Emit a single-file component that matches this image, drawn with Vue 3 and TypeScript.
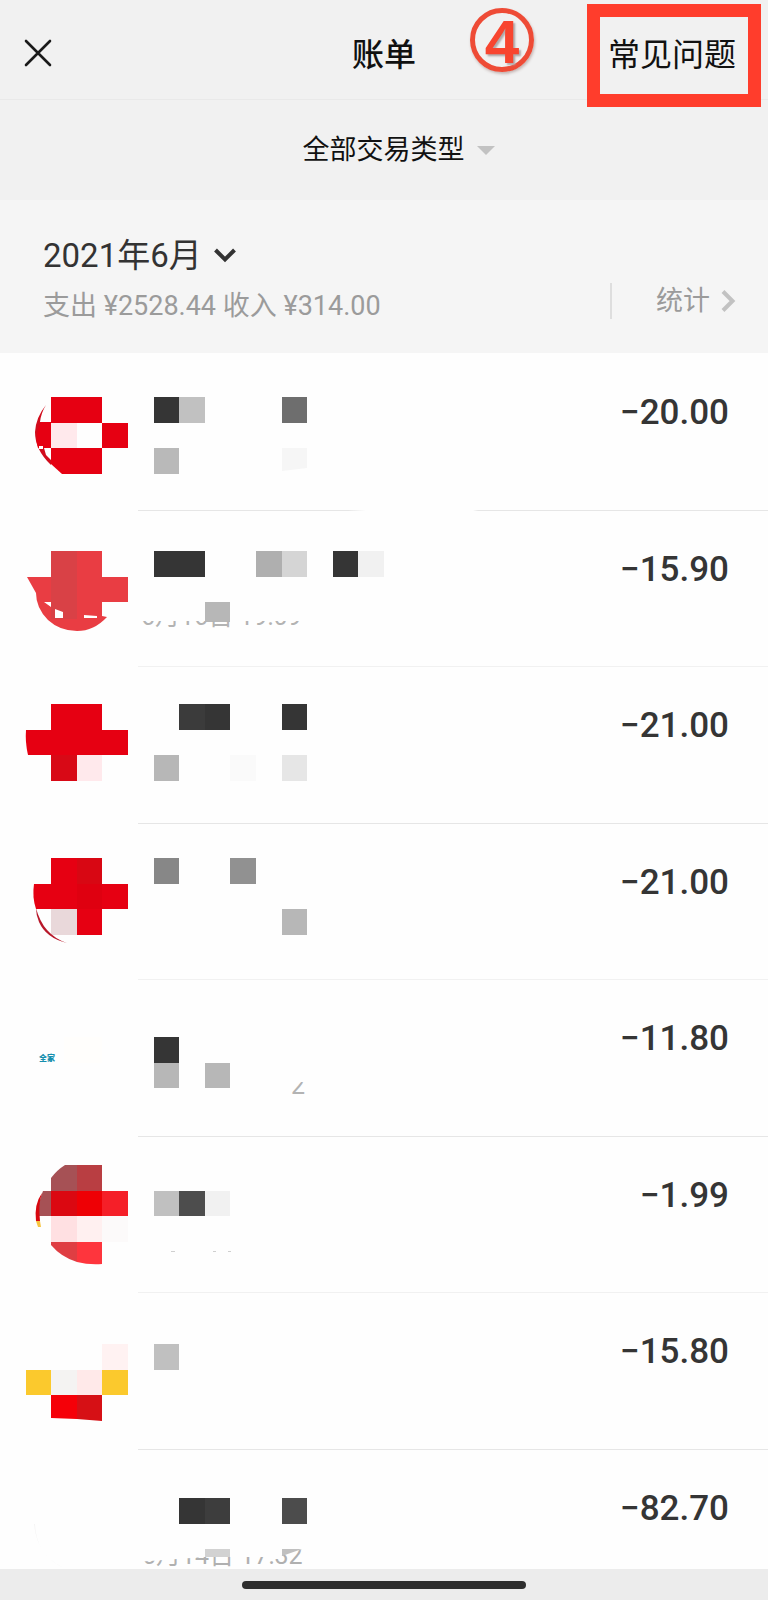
<script setup lang="ts">
interface Cell {
  col: number
  row: number
  fill: string
}
interface Shape {
  d: string
  fill: string
}
interface Note {
  text: string
  x: number
  y: number
  size: number
  fill: string
  clip: string
}
interface Bill {
  amount: string
  top: number
  cells: Cell[]
  shapes: Shape[]
  notes: Note[]
}

const CELL = 25.6
const edge = (n: number): number => Math.round(n * CELL)
const cell = (col: number, row: number, fill: string): Cell => ({ col, row, fill })

const bills: Bill[] = [
  {
    amount: '−20.00',
    top: 44,
    cells: [
      cell(2, 0, '#e60012'), cell(3, 0, '#e60012'),
      cell(2, 1, '#ffe9ec'), cell(4, 1, '#e60012'),
      cell(3, 2, '#e60012'),
      cell(6, 0, '#353535'), cell(7, 0, '#c1c1c1'), cell(11, 0, '#6e6e6e'),
      cell(6, 2, '#b9b9b9'),
    ],
    shapes: [
      { d: 'M51 95H77V121H62L51 111Z', fill: '#e60012' },
      { d: 'M46 52Q41 60 40 69H51V95H44L46 102L51 107V112Q35 97 35 79Q36 64 46 52Z', fill: '#d10c1c' },
      { d: 'M41 69H51V95H38Q34 82 41 69Z', fill: '#e60012' },
      { d: 'M39 93h4v3h-4Z', fill: '#ffffff' },
      { d: 'M282 95H307V115L282 118Z', fill: '#f6f6f6' },
    ],
    notes: [],
  },
  {
    amount: '−15.90',
    top: 41,
    cells: [
      cell(2, 0, '#d94146'), cell(3, 0, '#e93d43'),
      cell(2, 1, '#d94146'), cell(3, 1, '#e93d43'), cell(4, 1, '#e93d43'),
      cell(6, 0, '#353535'), cell(7, 0, '#353535'),
      cell(10, 0, '#afafaf'), cell(11, 0, '#d5d5d5'),
      cell(13, 0, '#353535'), cell(14, 0, '#f1f1f1'),
    ],
    shapes: [
      { d: 'M27 67H51V92H102V106L107 107Q94 121 77 121Q60 121 48 110Q36 98 36 83Z', fill: '#e93d43' },
      { d: 'M51 92H77V109H51Z', fill: '#d94146' },
      { d: 'M44 92H51V97ZM55 99L63 102V108H55ZM84 105L97 106V108H84Z', fill: '#ffffff' },
      { d: 'M205 92H230V112H205Z', fill: '#b7b7b7' },
    ],
    notes: [
      { text: '6月16日 19:09', x: 141, y: 115, size: 25, fill: '#b3b3b3', clip: 'M136 111H310V118H136Z' },
    ],
  },
  {
    amount: '−21.00',
    top: 38,
    cells: [
      cell(2, 0, '#e60012'), cell(3, 0, '#e60012'),
      cell(2, 1, '#e60012'), cell(3, 1, '#e60012'), cell(4, 1, '#e60012'),
      cell(2, 2, '#d80916'), cell(3, 2, '#ffe9ec'),
      cell(7, 0, '#3b3b3b'), cell(8, 0, '#353535'), cell(11, 0, '#353535'),
      cell(6, 2, '#b7b7b7'), cell(9, 2, '#fafafa'), cell(11, 2, '#e6e6e6'),
    ],
    shapes: [{ d: 'M26 64H51V89H28Q25 76 26 64Z', fill: '#e60012' }],
    notes: [],
  },
  {
    amount: '−21.00',
    top: 35,
    cells: [
      cell(2, 0, '#e60012'), cell(3, 0, '#d80713'),
      cell(2, 1, '#e60012'), cell(3, 1, '#df0010'), cell(4, 1, '#e60012'),
      cell(2, 2, '#e9d8da'), cell(3, 2, '#e60012'),
      cell(6, 0, '#878787'), cell(9, 0, '#919191'), cell(11, 2, '#b7b7b7'),
    ],
    shapes: [
      { d: 'M34 61H51V86H36Q32 74 34 61Z', fill: '#e60012' },
      { d: 'M36 85Q43 112 67 120Q46 115 39 99Q36 92 36 85Z', fill: '#b8182a' },
    ],
    notes: [],
  },
  {
    amount: '−11.80',
    top: 58,
    cells: [cell(6, 0, '#353535'), cell(6, 1, '#b7b7b7'), cell(8, 1, '#b7b7b7')],
    shapes: [{ d: 'M64 58H102V84H64Z', fill: '#fffefc' }],
    notes: [
      { text: '全家', x: 39, y: 82, size: 8, fill: '#178fae', clip: 'M36 70H58V88H36Z' },
      { text: '2', x: 291, y: 115, size: 25, fill: '#b3b3b3', clip: 'M288 118V113L301 103H306V118Z' },
    ],
  },
  {
    amount: '−1.99',
    top: 29,
    cells: [
      cell(3, 0, '#b93e42'),
      cell(2, 1, '#db0811'), cell(3, 1, '#ee0005'), cell(4, 1, '#f51f28'),
      cell(2, 2, '#ffe0e2'), cell(3, 2, '#fff0f0'), cell(4, 2, '#fcfafa'),
      cell(6, 1, '#c0c0c0'), cell(7, 1, '#4d4d4d'), cell(8, 1, '#f1f1f1'),
    ],
    shapes: [
      { d: 'M65 29H77V55H51V42Q57 34 65 29Z', fill: '#a65155' },
      { d: 'M43 55H51V80H39Q37 68 43 55Z', fill: '#a65155' },
      { d: 'M42 57Q38 68 40 85H36Q34 68 42 57Z', fill: '#d8070f' },
      { d: 'M36 85H40L41 91H38Z', fill: '#f7c542' },
      { d: 'M51 106H77V126Q61 121 51 109Z', fill: '#df3e43' },
      { d: 'M77 106H102V128Q89 129 77 126Z', fill: '#fe353d' },
      { d: 'M171 115h4v1h-4ZM213 115h3v1h-3ZM228 115h3v1h-3Z', fill: '#cfcfcf' },
    ],
    notes: [],
  },
  {
    amount: '−15.80',
    top: 52,
    cells: [
      cell(4, 0, '#fff2f2'),
      cell(1, 1, '#fbc92d'), cell(2, 1, '#f4f3f2'), cell(3, 1, '#ffe9e9'), cell(4, 1, '#fbc92d'),
      cell(6, 0, '#c0c0c0'),
    ],
    shapes: [
      { d: 'M51 103H77V127L51 126Z', fill: '#f50008' },
      { d: 'M77 103H102V129L77 127Z', fill: '#d61015' },
    ],
    notes: [],
  },
  {
    amount: '−82.70',
    top: 49,
    cells: [cell(7, 0, '#353535'), cell(8, 0, '#3d3d3d'), cell(11, 0, '#4c4c4c')],
    shapes: [
      { d: 'M35 75Q36 106 64 119Q37 107 34 75Z', fill: '#f4f4f4' },
      { d: 'M205 100H230V108H205Z', fill: '#d2d2d2' },
      { d: 'M282 100H302L282 107Z', fill: '#c0c0c0' },
    ],
    notes: [
      { text: '6月14日 17:32', x: 142, y: 115, size: 25, fill: '#b0b0b0', clip: 'M136 113L205 108H278L303 100H310V119H136Z' },
    ],
  },
]
</script>

<template>
  <main class="page">
    <header class="topbar">
      <button class="close" type="button" aria-label="关闭">
        <svg width="28" height="28" viewBox="0 0 28 28" fill="none" stroke="#1a1a1a" stroke-width="2.6" stroke-linecap="round">
          <path d="M2 2L26 26M26 2L2 26" />
        </svg>
      </button>
      <h1 class="title">账单</h1>
      <div class="step">4</div>
      <a class="faq" href="#faq">常见问题</a>
    </header>

    <div class="filter">
      <button class="filter-button" type="button">
        全部交易类型
        <svg width="18" height="9" viewBox="0 0 18 9"><path d="M0 0H18L9 9Z" fill="#c2c2c2" /></svg>
      </button>
    </div>

    <section class="summary">
      <div class="period">
        <button class="month" type="button">
          2021年6月
          <svg width="22" height="15" viewBox="0 0 22 15" fill="none" stroke="#333333" stroke-width="4">
            <path d="M1.5 2L11 11.5L20.5 2" />
          </svg>
        </button>
        <p class="totals">支出 ¥2528.44 收入 ¥314.00</p>
      </div>
      <a class="stats" href="#stats">
        统计
        <svg width="15" height="22" viewBox="0 0 15 22" fill="none" stroke="#c2c2c2" stroke-width="4">
          <path d="M2 1.5L11.5 11L2 20.5" />
        </svg>
      </a>
    </section>

    <ul class="bills">
      <li v-for="(bill, i) in bills" :key="i" class="bill">
        <svg class="mosaic" width="400" height="119" viewBox="0 0 400 119" aria-hidden="true">
          <rect
            v-for="(c, k) in bill.cells"
            :key="k"
            :x="edge(c.col)"
            :y="bill.top + edge(c.row)"
            :width="edge(c.col + 1) - edge(c.col)"
            :height="edge(c.row + 1) - edge(c.row)"
            :fill="c.fill"
          />
          <path v-for="(s, k) in bill.shapes" :key="'s' + k" :d="s.d" :fill="s.fill" />
          <g v-for="(n, k) in bill.notes" :key="'n' + k">
            <clipPath :id="`clip-${i}-${k}`"><path :d="n.clip" /></clipPath>
            <text
              :class="{ strong: n.size < 10 }"
              :x="n.x"
              :y="n.y"
              :font-size="n.size"
              :fill="n.fill"
              :clip-path="`url(#clip-${i}-${k})`"
            >{{ n.text }}</text>
          </g>
        </svg>
        <span class="amount">{{ bill.amount }}</span>
      </li>
    </ul>

    <footer class="navbar"><div class="handle"></div></footer>
  </main>
</template>

<style>
body {
  margin: 0;
  background: #fefefe;
}
</style>

<style scoped>
.page {
  display: flex;
  flex-direction: column;
  min-height: 100vh;
  color: #111111;
  font-family: Roboto, "Noto Sans CJK SC", sans-serif;
}
button {
  padding: 0;
  border: 0;
  background: none;
  color: inherit;
  font: inherit;
}
a {
  color: inherit;
  text-decoration: none;
}
svg {
  display: block;
}
.topbar {
  position: relative;
  display: grid;
  grid-template-columns: 1fr auto 1fr;
  align-items: center;
  height: 100px;
  padding: 0 6px 0 24px;
  border-bottom: 1px solid #e9e9e9;
  background: #f1f1f1;
  box-sizing: border-box;
}
.close {
  justify-self: start;
  padding-top: 7px;
}
.title {
  margin: 0;
  padding: 10px 18px 0 0;
  font-size: 32px;
  line-height: 40px;
  font-weight: 500;
}
.step {
  position: absolute;
  top: 8px;
  left: 470px;
  width: 54px;
  height: 54px;
  border: 5px solid #ee4b36;
  border-radius: 50%;
  color: #f8452f;
  font: bold 62px/58px "Liberation Sans", sans-serif;
  text-align: center;
  text-shadow: 2px 2px 2px #b0a8a8;
  box-shadow: 1px 2px 3px #c4b4b2;
}
.faq {
  position: absolute;
  top: 4px;
  right: 7px;
  padding: 18px 12px 19px 8px;
  border: 13px solid #ff3d2c;
  font-size: 32px;
  line-height: 40px;
  color: #111111;
}
.filter {
  display: flex;
  justify-content: center;
  height: 100px;
  padding-left: 29px;
  background: #f1f1f1;
}
.filter-button {
  display: flex;
  align-items: center;
  gap: 12px;
  font-size: 27px;
  line-height: 40px;
}
.summary {
  display: flex;
  justify-content: space-between;
  align-items: center;
  height: 153px;
  padding: 0 32px 0 43px;
  background: #f5f5f5;
}
.period {
  padding-top: 8px;
}
.month {
  display: flex;
  align-items: center;
  gap: 12px;
  color: #333333;
  font-size: 33px;
  line-height: 48px;
}
.totals {
  margin: 2px 0 0;
  color: #9b9b9b;
  font-size: 27px;
  line-height: 48px;
}
.stats {
  display: flex;
  align-items: center;
  gap: 11px;
  align-self: flex-end;
  margin-bottom: 34px;
  padding-left: 44px;
  border-left: 2px solid #dedede;
  color: #9b9b9b;
  font-size: 27px;
  line-height: 36px;
}
.bills {
  flex: 1;
  margin: 0;
  padding: 0;
  list-style: none;
}
.bill {
  display: flex;
  justify-content: space-between;
  height: 157px;
  background: linear-gradient(#f1f1f1, #f1f1f1) 138px 0 / 100% 1px no-repeat;
}
.bill:nth-child(even) {
  height: 156px;
  background-image: linear-gradient(#e6e6e6, #e6e6e6);
}
.bill:nth-child(2) {
  background-image: linear-gradient(90deg, #e6e6e6 210px, #fefefe 228px, #fefefe 335px, #e6e6e6 340px);
}
.bill:first-child {
  background: none;
}
.bill:last-child {
  height: 120px;
}
.mosaic {
  flex: none;
  overflow: visible;
}
.strong {
  font-weight: 900;
}
.amount {
  padding: 39px 39px 0 0;
  color: #353535;
  font-size: 35px;
  line-height: 42px;
  font-weight: 500;
}
.navbar {
  display: flex;
  justify-content: center;
  align-items: center;
  height: 31px;
  background: #ececec;
}
.handle {
  width: 37%;
  height: 8px;
  border-radius: 4px;
  background: #2e2e2e;
}
</style>
